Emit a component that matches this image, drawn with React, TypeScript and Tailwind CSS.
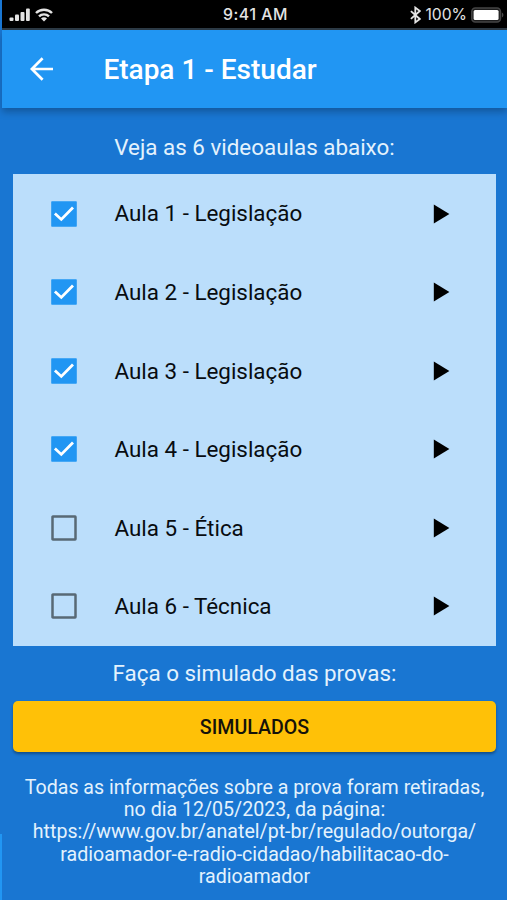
const LESSONS = [
  { id: 1, title: "Aula 1 - Legislação", done: true },
  { id: 2, title: "Aula 2 - Legislação", done: true },
  { id: 3, title: "Aula 3 - Legislação", done: true },
  { id: 4, title: "Aula 4 - Legislação", done: true },
  { id: 5, title: "Aula 5 - Ética", done: false },
  { id: 6, title: "Aula 6 - Técnica", done: false }
];

const SOURCE_LINES = [
  "Todas as informações sobre a prova foram retiradas,",
  "no dia 12/05/2023, da página:",
  "https://www.gov.br/anatel/pt-br/regulado/outorga/",
  "radioamador-e-radio-cidadao/habilitacao-do-",
  "radioamador"
];

function StatusBar() {
  return (
    <div className="grid h-[30px] grid-cols-3 items-center border-b-2 border-[#2d3b47] bg-black pt-[2px] pr-[3px] pl-[7px] font-['Inter','Liberation_Sans',sans-serif] text-[#e4e4e4]">
      <div className="flex items-center gap-[5px]">
        <svg width="21" height="14" viewBox="0 0 21 14" fill="currentColor">
          <rect x="0.5" y="9.5" width="4" height="3.5" rx="1" />
          <rect x="6" y="6.5" width="4" height="6.5" rx="1" />
          <rect x="11.5" y="4" width="4" height="9" rx="1" />
          <rect x="17" y="0.5" width="3.8" height="12.5" rx="1" />
        </svg>
        <svg width="18" height="14" viewBox="0 0 18 14" fill="none" stroke="currentColor" strokeWidth="2.4">
          <path d="M1 5a11.3 11.3 0 0 1 16 0" />
          <path d="M4 8.4a7.1 7.1 0 0 1 10 0" />
          <path d="M9 13.4 6 10.4a4.2 4.2 0 0 1 6 0z" fill="currentColor" stroke="none" />
        </svg>
      </div>
      <span className="pr-[2px] text-center text-[15.8px] leading-none font-medium tracking-[0.55px] whitespace-nowrap">9:41 AM</span>
      <div className="flex items-center justify-end">
        <svg width="11" height="18" viewBox="0 0 11 18" fill="none" stroke="currentColor" strokeWidth="1.8">
          <path d="M0.9 5.1 9.8 13 5.3 16.4V1.6L9.8 5 0.9 12.9" />
        </svg>
        <span className="mr-[4px] ml-[4px] text-[15.7px] leading-none">100%</span>
        <svg width="33" height="16" viewBox="0 0 33 16">
          <rect x="0.8" y="1" width="28.7" height="14" rx="3.5" fill="#1c1c1c" stroke="#444" strokeWidth="1.5" />
          <rect x="2.6" y="3" width="25" height="10" rx="1.5" fill="#fff" />
          <path d="M30.9 5.5c2 .8 2 4.2 0 5z" fill="#4a4a4a" />
        </svg>
      </div>
    </div>
  );
}

function Checkbox({ checked }: { checked: boolean }) {
  return (
    <svg width="26" height="26" viewBox="0 0 26 26" fill="none">
      {checked ? (
        <>
          <rect x="0.2" y="0.3" width="25.6" height="25.4" rx="0.7" fill="#2196f3" />
          <path d="M3.9 12.4 10.3 18.4 22 6.4" stroke="#fff" strokeWidth="2.8" />
        </>
      ) : (
        <rect x="1.5" y="1.5" width="23" height="23" rx="0.4" stroke="#586975" strokeWidth="2.5" />
      )}
    </svg>
  );
}

export default function App() {
  return (
    <div className="flex h-[900px] w-[507px] overflow-hidden bg-[#1976d2] font-['Roboto','Liberation_Sans',sans-serif]">
      <div className="flex w-[2px] shrink-0 flex-col justify-end">
        <div className="h-[66px] bg-[#2196f3]" />
      </div>
      <div className="flex min-w-0 flex-1 flex-col">
        <StatusBar />
        <header className="z-10 flex h-[78px] shrink-0 items-center bg-[#2196f3] pl-[28px] text-white shadow-[0_4px_7px_rgba(0,0,0,0.25)]">
          <svg width="24" height="24" viewBox="0 0 24 24" fill="none" stroke="currentColor" strokeWidth="2.7">
            <path d="M23 12H2.5M12.6 1.2 1.9 12l10.7 10.8" />
          </svg>
          <h1 className="mt-[2px] ml-[49.4px] text-[28px] leading-none font-medium whitespace-nowrap">Etapa 1 - Estudar</h1>
        </header>

        <main className="flex flex-1 flex-col pr-[11px] pl-[11px]">
          <p className="flex h-[66.4px] items-center justify-center pt-[13px] text-[22.4px] text-[#e3f2fd]">
            Veja as 6 videoaulas abaixo:
          </p>
          <ul className="h-[471.3px] bg-[#bbdefb]">
            {LESSONS.map((lesson) => (
              <li key={lesson.id} className="flex h-[78.55px] items-center pr-[46.2px] pl-[38px]">
                <Checkbox checked={lesson.done} />
                <span className="ml-[37.5px] flex-1 text-[22.4px] leading-none text-[#080c10]">{lesson.title}</span>
                <svg width="17" height="20" viewBox="0 0 17 20" fill="#000">
                  <path d="M0.8 0.5v19L16.4 10z" />
                </svg>
              </li>
            ))}
          </ul>
          <p className="flex h-[55.3px] items-center justify-center pt-px text-[22.4px] text-[#e3f2fd]">
            Faça o simulado das provas:
          </p>
          <button
            type="button"
            className="h-[51px] shrink-0 rounded-[5px] bg-[#ffc107] pt-[2px] text-[19.6px] font-medium text-[#15120a] shadow-[0_2px_3px_rgba(0,0,0,0.35)]"
          >
            SIMULADOS
          </button>
          <p className="mt-[24.6px] text-center text-[19.6px] leading-[22.4px] whitespace-nowrap text-[#e3f2fd]">
            {SOURCE_LINES.map((line) => (
              <span key={line} className="block">{line}</span>
            ))}
          </p>
        </main>
      </div>
    </div>
  );
}
